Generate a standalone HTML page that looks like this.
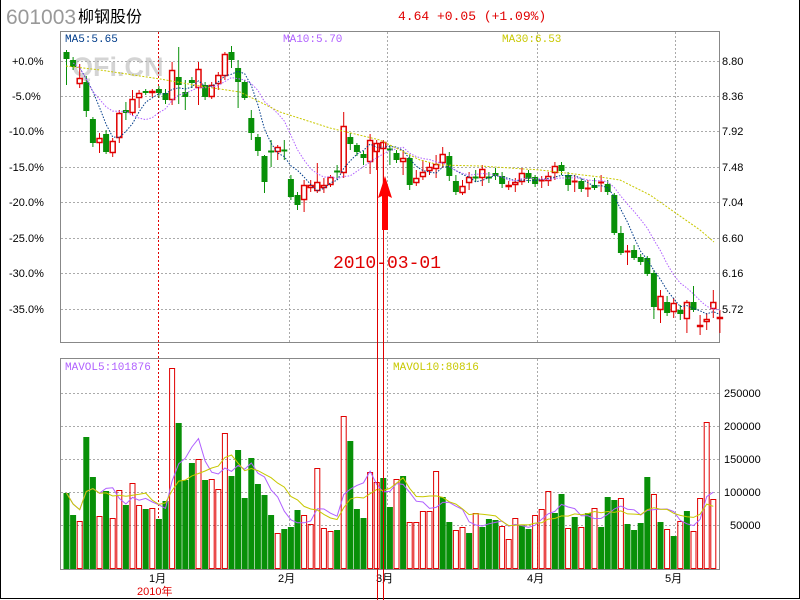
<!DOCTYPE html>
<html><head><meta charset="utf-8"><style>
html,body{margin:0;padding:0;background:#fff;width:800px;height:600px;overflow:hidden}
svg{display:block}
</style></head><body>
<svg id="s" width="800" height="600" xmlns="http://www.w3.org/2000/svg" font-family="Liberation Sans, 'Noto Sans CJK SC', sans-serif">
<rect x="0" y="0" width="800" height="600" fill="#fff"/>
<line x1="0.5" y1="0" x2="0.5" y2="599" stroke="#000"/>
<line x1="799.5" y1="0" x2="799.5" y2="599" stroke="#000"/>
<line x1="0" y1="598.5" x2="800" y2="598.5" stroke="#000"/>
<text x="6" y="24" font-size="21" fill="#999">601003</text>
<text x="78" y="22" font-size="16" fill="#000" font-family="'Noto Sans CJK SC', sans-serif">柳钢股份</text>
<text x="398" y="20" font-size="13" fill="#e00000" font-family="Liberation Mono, 'Noto Sans CJK SC', monospace">4.64 +0.05 (+1.09%)</text>
<text x="72" y="76" font-size="27" font-weight="bold" fill="#d4d4d4">QFi.CN</text>
<g id="grid" stroke="#aaa" stroke-dasharray="2,2" stroke-width="1"></g>
<rect x="60.5" y="31.5" width="659" height="311" fill="none" stroke="#888"/>
<rect x="60.5" y="358.5" width="659" height="211" fill="none" stroke="#888"/>
<line x1="158.5" y1="32" x2="158.5" y2="569" stroke="#e00000" stroke-dasharray="2,2"/>
<g id="c"></g>
<g font-family="Liberation Mono, monospace" font-size="11">
<text x="65" y="42" fill="#003c8a">MA5:5.65</text>
<text x="283" y="42" fill="#b060ff">MA10:5.70</text>
<text x="502" y="42" fill="#c8c800">MA30:6.53</text>
<text x="65" y="370" fill="#b060ff">MAVOL5:101876</text>
<text x="393" y="370" fill="#c8c800">MAVOL10:80816</text>
</g>
<g font-size="11" fill="#000">
<text x="12" y="65">+0.0%</text><text x="12" y="100">-5.0%</text><text x="9" y="135">-10.0%</text><text x="9" y="171">-15.0%</text><text x="9" y="206">-20.0%</text><text x="9" y="242">-25.0%</text><text x="9" y="277">-30.0%</text><text x="9" y="313">-35.0%</text>
<text x="722" y="65">8.80</text><text x="722" y="100">8.36</text><text x="722" y="135">7.92</text><text x="722" y="171">7.48</text><text x="722" y="206">7.04</text><text x="722" y="242">6.60</text><text x="722" y="277">6.16</text><text x="722" y="313">5.72</text>
<text x="724" y="397">250000</text><text x="724" y="430">200000</text><text x="724" y="463">150000</text><text x="724" y="496">100000</text><text x="730" y="529">50000</text>
</g>
<g font-size="11" font-family="Liberation Sans,'Noto Sans CJK SC',sans-serif">
<text x="149" y="582">1月</text><text x="278" y="582">2月</text><text x="376" y="582">3月</text><text x="527" y="582">4月</text><text x="665" y="582">5月</text>
<text x="137" y="595" fill="#e00000">2010年</text>
</g>
<line x1="377.5" y1="143" x2="377.5" y2="600" stroke="#e00000"/>
<line x1="383.5" y1="143" x2="383.5" y2="600" stroke="#e00000"/>
<path d="M385 176 L392 198 L388 196 L388 230 L382 230 L382 196 L378 198 Z" fill="#f00"/>
<text x="333" y="268" font-size="18" fill="#e00000" font-family="Liberation Mono, monospace">2010-03-01</text>
</svg>
<script>
var NS="http://www.w3.org/2000/svg";
function el(p,t,a){var e=document.createElementNS(NS,t);for(var k in a)e.setAttribute(k,a[k]);p.appendChild(e);return e;}
var g=document.getElementById('grid');
[61,96,131,167,202,238,273,309,393,426,459,492,525].forEach(function(y){el(g,'line',{x1:61,x2:719,y1:y+.5,y2:y+.5});});
[289,387,537,675].forEach(function(x){el(g,'line',{x1:x+.5,x2:x+.5,y1:32,y2:342});el(g,'line',{x1:x+.5,x2:x+.5,y1:359,y2:569});});
// candles: [color r/g, top, bottom, wickTop, wickBot]
var C=[['g',52,59,50,85],['g',60,67,57,70],['r',78,84,64,88],['g',82,111,76,117],['g',119,143,117,147],['r',138,143,133,153],['g',134,152,130,154],['r',141,153,138,157],['r',113,138,110,143],['g',110,113,102,120],
['r',99,113,90,116],['r',93,98,90,108],['g',91,93,89,95],['r',91,93,89,97],['g',89,93,86,98],['g',93,100,89,104],['r',70,100,62,105],['g',77,85,47,104],['g',92,97,80,110],['g',80,83,77,88],
['r',69,88,62,105],['g',85,97,82,100],['r',85,97,82,99],['r',75,84,72,90],['r',54,76,52,80],['g',52,60,46,68],['g',68,82,60,108],['g',82,98,80,100],['g',118,133,110,140],['g',137,151,134,156],
['g',156,182,155,193],['g',151,152,140,167],['r',147,152,145,160],['g',150,151,140,160],['g',179,197,175,200],['g',195,205,192,210],['r',185,200,180,212],['r',185,188,180,192],['r',182,191,163,193],['r',185,188,178,193],
['r',177,185,175,187],['g',171,172,165,180],['r',126,173,112,178],['g',137,144,133,150],['g',145,152,143,156],['g',154,158,151,165],['r',140,162,134,174],['r',143,152,140,170],['r',142,149,140,200],['g',149,150,145,165],
['g',153,160,150,163],['r',158,162,150,175],['g',158,185,155,190],['r',178,183,170,186],['r',172,177,160,180],['r',167,171,163,175],['r',164,169,155,178],['r',154,163,147,168],['g',156,176,152,181],['g',181,192,175,195],
['r',186,193,180,195],['r',177,183,172,190],['g',177,178,170,182],['r',169,178,165,186],['g',177,178,172,183],['g',173,176,168,180],['g',176,184,172,188],['r',185,187,181,190],['r',182,185,178,192],['r',173,182,168,185],
['g',173,179,170,183],['g',177,184,175,187],['r',180,181,176,188],['r',176,181,172,186],['r',166,173,162,180],['g',165,171,162,175],['g',175,185,172,191],['r',181,182,175,192],['g',181,189,178,192],['r',188,189,180,197],
['g',185,188,178,190],['r',182,183,175,192],['g',184,192,180,195],['g',195,233,193,235],['g',233,253,226,255],['r',251,252,245,265],['g',250,258,245,260],['g',257,262,254,265],['g',258,274,256,276],['g',273,307,270,319],
['r',296,310,290,323],['g',302,313,296,316],['r',303,312,298,318],['g',310,314,305,320],['r',302,319,300,333],['g',302,310,286,312],['r',325,327,315,335],['r',319,322,313,330],['r',302,309,290,318],['r',317,319,310,333]];
var V=[['g',493],['g',515],['r',521],['g',437],['g',477],['r',516],['g',491],['r',518],['r',490],['g',505],['r',483],['r',505],['g',509],['r',508],['g',519],['g',501],['r',368],['g',423],['g',480],['g',463],['r',459],['g',480],['r',479],['r',489],['r',433],['g',476],['g',450],['g',498],['g',458],['g',484],['g',495],['g',515],['r',533],['g',529],['g',527],['g',510],['r',515],['r',524],['r',468],['r',528],['r',531],['g',530],['r',416],['g',441],['g',509],['g',518],['r',472],['r',482],['g',478],['g',507],['r',479],['g',476],['r',522],['r',522],['r',511],['r',511],['r',471],['g',497],['g',522],['r',530],['r',527],['g',533],['r',513],['g',527],['g',519],['g',520],['r',526],['r',539],['r',518],['g',525],['g',529],['r',515],['r',509],['r',491],['g',513],['g',494],['r',528],['g',517],['r',527],['g',513],['r',508],['g',527],['g',497],['g',500],['r',498],['g',524],['g',530],['g',523],['g',477],['r',494],['g',522],['r',529],['g',536],['r',521],['g',511],['r',531],['r',498],['r',422],['r',499]];
var cg=document.getElementById('c');
var GR="#089008",RD="#e00000";
function X(i){return 66.5+6.6*i;}
// volume bars
V.forEach(function(v,i){var x=X(i)-2.5;if(v[0]=='g')el(cg,'rect',{x:x-0.5,y:v[1],width:6,height:569-v[1],fill:GR});else el(cg,'rect',{x:x,y:v[1]+0.5,width:5,height:568-v[1],fill:'none',stroke:RD});});
// candles
var closes=[];
C.forEach(function(c,i){var x=X(i),col=c[0]=='g'?GR:RD;closes.push(c[0]=='g'?c[2]:c[1]);
el(cg,'line',{x1:x,x2:x,y1:c[3],y2:c[4],stroke:col});
var h=c[2]-c[1];
if(h<2){el(cg,'line',{x1:x-3,x2:x+3,y1:c[1]+.5,y2:c[1]+.5,stroke:col,'stroke-width':2});}
else if(c[0]=='g')el(cg,'rect',{x:x-3,y:c[1],width:6,height:h,fill:GR});
else el(cg,'rect',{x:x-2.5,y:c[1]+.5,width:5,height:h-1,fill:'#fff',stroke:RD,'stroke-width':1.5});});
function ma(arr,n){return arr.map(function(_,i){var s=0,k=0;for(var j=Math.max(0,i-n+1);j<=i;j++){s+=arr[j];k++;}return s/k;});}
function pl(pts,col,dash,w){el(cg,'polyline',{points:pts.join(' '),fill:'none',stroke:col,'stroke-dasharray':dash||'none','stroke-width':w||1});}
var m5=ma(closes,5),m10=ma(closes,10);
pl(m5.map(function(y,i){return X(i)+','+y.toFixed(1);}).slice(2),'#003c8a','1.5,1.5');
pl(m10.map(function(y,i){return X(i)+','+y.toFixed(1);}).slice(1),'#b060ff','1.5,1.5');
pl(['66,66','100,70','160,79','200,86','240,92','280,112','330,128','380,140','420,160','440,165','480,166','540,170','600,177','620,180','650,195','700,230','714,242'],'#c8c800','2,1.5');
var hv=V.map(function(v){return 569-v[1];});
var v5=ma(hv,5),v10=ma(hv,10);
pl(v5.map(function(h,i){return X(i)+','+(569-h).toFixed(1);}),'#b060ff');
pl(v10.map(function(h,i){return X(i)+','+(569-h).toFixed(1);}),'#c8c800');
</script>
</body></html>
